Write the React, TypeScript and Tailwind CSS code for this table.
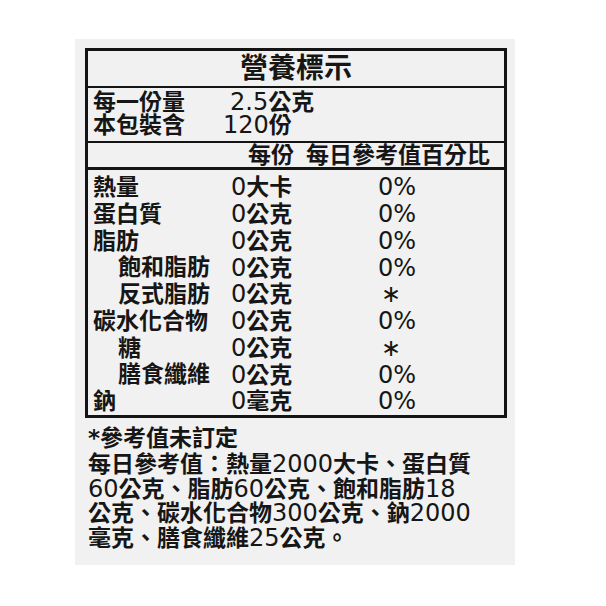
const FONT = "font-['DejaVu_Sans','Noto_Sans_CJK_TC',sans-serif]";

type Row = { name: string; indent?: boolean; amount: string; pct: string };

const rows: Row[] = [
  { name: "熱量", amount: "0大卡", pct: "0%" },
  { name: "蛋白質", amount: "0公克", pct: "0%" },
  { name: "脂肪", amount: "0公克", pct: "0%" },
  { name: "飽和脂肪", indent: true, amount: "0公克", pct: "0%" },
  { name: "反式脂肪", indent: true, amount: "0公克", pct: "*" },
  { name: "碳水化合物", amount: "0公克", pct: "0%" },
  { name: "糖", indent: true, amount: "0公克", pct: "*" },
  { name: "膳食纖維", indent: true, amount: "0公克", pct: "0%" },
  { name: "鈉", amount: "0毫克", pct: "0%" },
];

// digits in the label print lighter (and a touch larger) than the CJK glyphs
function T({ children }: { children: string }) {
  const parts = children.split(/([0-9.%]+)/);
  return (
    <>
      {parts.map((p, i) =>
        i % 2 === 1 ? (
          <span key={i} className="font-normal text-[24px]">
            {p}
          </span>
        ) : (
          p
        )
      )}
    </>
  );
}

export default function App() {
  return (
    <div className={`w-[606px] h-[606px] bg-white pt-[39px] pl-[75px] text-[#161616] font-bold ${FONT}`}>
      <div className="w-[440px] h-[526px] bg-[#f1f1f1] pt-[9px] pl-[10px]">
        <div className="w-[422px] border-[3px] border-[#141414]">
          <div className="h-[37px] flex items-center justify-center text-[28px] border-b-2 border-[#141414]">
            營養標示
          </div>

          <div className="pt-[3px] pb-[4px] pl-[5px] text-[23px] leading-[23px] border-b-2 border-[#141414]">
            <div className="flex">
              <span className="w-[130px]">每一份量</span>
              <span className="pl-[7px]">
                <T>2.5公克</T>
              </span>
            </div>
            <div className="flex">
              <span className="w-[130px]">本包裝含</span>
              <span>
                <T>120份</T>
              </span>
            </div>
          </div>

          <div className="h-[27px] flex items-center pl-[160px] gap-[12px] text-[23px] border-b-[3px] border-[#141414]">
            <span>每份</span>
            <span>每日參考值百分比</span>
          </div>

          <div className="pt-[4px] pl-[5px] text-[23px]">
            {rows.map((r) => (
              <div key={r.name} className="flex h-[26.75px] items-center">
                <span className={`w-[138px] ${r.indent ? "pl-[25px]" : ""}`}>{r.name}</span>
                <span className="w-[147px]">
                  <T>{r.amount}</T>
                </span>
                {r.pct === "*" ? (
                  <span className="pl-[3px] text-[24px] font-normal">∗</span>
                ) : (
                  <span className="font-normal text-[24px]">{r.pct}</span>
                )}
              </div>
            ))}
          </div>
        </div>

        <div className="pl-[3px] pt-[8px] text-[23px] leading-[24.5px]">
          <p className="mb-[2px]">*參考值未訂定</p>
          <p>
            <T>每日參考值：熱量2000大卡、蛋白質</T>
          </p>
          <p>
            <T>60公克、脂肪60公克、飽和脂肪18</T>
          </p>
          <p>
            <T>公克、碳水化合物300公克、鈉2000</T>
          </p>
          <p>
            <T>毫克、膳食纖維25公克。</T>
          </p>
        </div>
      </div>
    </div>
  );
}
